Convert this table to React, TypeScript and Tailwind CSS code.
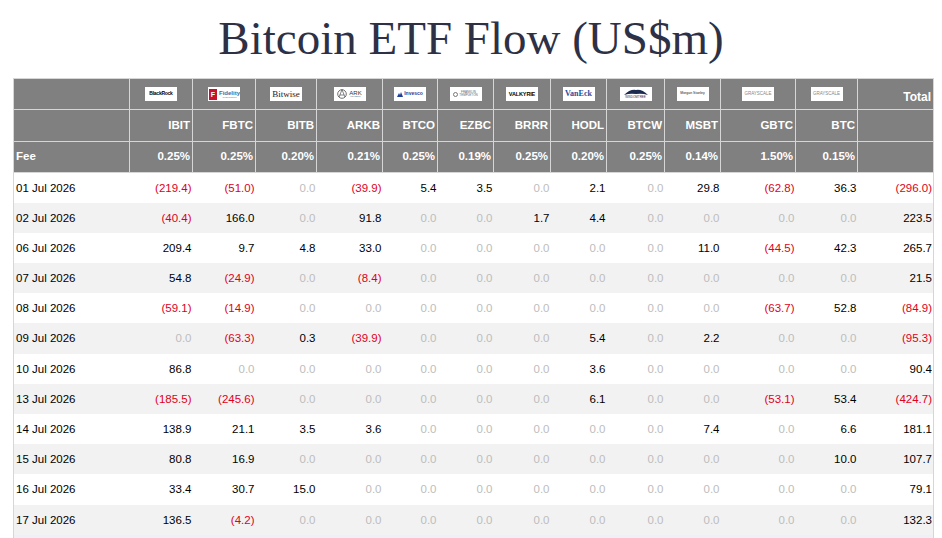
import React from "react"

type Fund = { ticker: string; fee: string; logo: React.ReactNode; width: number }

function LogoBox({ children, className = "" }: { children: React.ReactNode; className?: string }) {
  return (
    <div
      className={`mx-auto flex h-[14px] w-[32px] items-center justify-center overflow-hidden bg-white font-normal ${className}`}
    >
      {children}
    </div>
  )
}

const funds: Fund[] = [
  {
    ticker: "IBIT",
    fee: "0.25%",
    width: 63,
    logo: (
      <LogoBox>
        <span className="text-[5px] font-bold tracking-tighter text-black">BlackRock</span>
      </LogoBox>
    ),
  },
  {
    ticker: "FBTC",
    fee: "0.25%",
    width: 63,
    logo: (
      <LogoBox className="justify-start gap-[2px] pl-[1px]">
        <span className="flex h-[11px] w-[8px] items-center justify-center bg-[#c8102e] text-[7px] font-bold leading-none text-white">
          F
        </span>
        <span className="flex flex-col leading-none">
          <span className="text-[6px] font-bold text-[#3b6ea8]">Fidelity</span>
          <span className="text-[2px] text-[#777]">INVESTMENTS</span>
        </span>
      </LogoBox>
    ),
  },
  {
    ticker: "BITB",
    fee: "0.20%",
    width: 61,
    logo: (
      <LogoBox>
        <span className="font-['Liberation_Serif',serif] text-[9px] leading-none text-[#222]">Bitwise</span>
      </LogoBox>
    ),
  },
  {
    ticker: "ARKB",
    fee: "0.21%",
    width: 66,
    logo: (
      <LogoBox className="gap-[2px]">
        <svg width="10" height="10" viewBox="0 0 10 10">
          <circle cx="5" cy="5" r="4.3" fill="none" stroke="#333" strokeWidth="0.7" />
          <path d="M5 0.7 L2 8 M5 0.7 L8 8 M3 6 L7 6" stroke="#333" strokeWidth="0.6" fill="none" />
        </svg>
        <span className="flex flex-col items-center leading-none">
          <span className="text-[6px] text-[#333]">ARK</span>
          <span className="text-[2.5px] tracking-widest text-[#555]">INVEST</span>
        </span>
      </LogoBox>
    ),
  },
  {
    ticker: "BTCO",
    fee: "0.25%",
    width: 55,
    logo: (
      <LogoBox className="gap-[1px]">
        <svg width="6" height="5" viewBox="0 0 6 5">
          <path d="M0 5 L2 1 L3 3 L4 0 L6 5 Z" fill="#1f3f99" />
        </svg>
        <span className="text-[5px] font-bold text-[#1f3f99]">Invesco</span>
      </LogoBox>
    ),
  },
  {
    ticker: "EZBC",
    fee: "0.19%",
    width: 56,
    logo: (
      <LogoBox className="gap-[1px]">
        <span className="h-[5px] w-[5px] rounded-full border-[0.5px] border-[#777]" />
        <span className="flex flex-col leading-none">
          <span className="text-[3px] text-[#666]">FRANKLIN</span>
          <span className="text-[3px] text-[#666]">TEMPLETON</span>
        </span>
      </LogoBox>
    ),
  },
  {
    ticker: "BRRR",
    fee: "0.25%",
    width: 57,
    logo: (
      <LogoBox>
        <span className="text-[5.5px] font-bold tracking-tight text-black">VALKYRIE</span>
      </LogoBox>
    ),
  },
  {
    ticker: "HODL",
    fee: "0.20%",
    width: 56,
    logo: (
      <LogoBox>
        <span className="font-['Liberation_Serif',serif] text-[8px] font-bold leading-none text-[#1e4e9e]">VanEck</span>
      </LogoBox>
    ),
  },
  {
    ticker: "BTCW",
    fee: "0.25%",
    width: 58,
    logo: (
      <LogoBox className="flex-col">
        <svg width="24" height="7" viewBox="0 0 24 7">
          <path d="M0 6 Q6 0 12 1 Q18 0 24 6 Q18 4 12 5 Q6 4 0 6 Z" fill="#1c2a4f" />
        </svg>
        <span className="text-[3px] leading-none text-[#1c2a4f]">WISDOMTREE</span>
      </LogoBox>
    ),
  },
  {
    ticker: "MSBT",
    fee: "0.14%",
    width: 56,
    logo: (
      <LogoBox>
        <span className="text-[3.5px] text-[#222]">Morgan Stanley</span>
      </LogoBox>
    ),
  },
  {
    ticker: "GBTC",
    fee: "1.50%",
    width: 75,
    logo: (
      <LogoBox>
        <span className="text-[4.5px] text-[#888]">GRAYSCALE</span>
      </LogoBox>
    ),
  },
  {
    ticker: "BTC",
    fee: "0.15%",
    width: 62,
    logo: (
      <LogoBox>
        <span className="text-[4.5px] text-[#888]">GRAYSCALE</span>
      </LogoBox>
    ),
  },
]

const rows: [string, string[]][] = [
  ["01 Jul 2026", ["(219.4)", "(51.0)", "0.0", "(39.9)", "5.4", "3.5", "0.0", "2.1", "0.0", "29.8", "(62.8)", "36.3", "(296.0)"]],
  ["02 Jul 2026", ["(40.4)", "166.0", "0.0", "91.8", "0.0", "0.0", "1.7", "4.4", "0.0", "0.0", "0.0", "0.0", "223.5"]],
  ["06 Jul 2026", ["209.4", "9.7", "4.8", "33.0", "0.0", "0.0", "0.0", "0.0", "0.0", "11.0", "(44.5)", "42.3", "265.7"]],
  ["07 Jul 2026", ["54.8", "(24.9)", "0.0", "(8.4)", "0.0", "0.0", "0.0", "0.0", "0.0", "0.0", "0.0", "0.0", "21.5"]],
  ["08 Jul 2026", ["(59.1)", "(14.9)", "0.0", "0.0", "0.0", "0.0", "0.0", "0.0", "0.0", "0.0", "(63.7)", "52.8", "(84.9)"]],
  ["09 Jul 2026", ["0.0", "(63.3)", "0.3", "(39.9)", "0.0", "0.0", "0.0", "5.4", "0.0", "2.2", "0.0", "0.0", "(95.3)"]],
  ["10 Jul 2026", ["86.8", "0.0", "0.0", "0.0", "0.0", "0.0", "0.0", "3.6", "0.0", "0.0", "0.0", "0.0", "90.4"]],
  ["13 Jul 2026", ["(185.5)", "(245.6)", "0.0", "0.0", "0.0", "0.0", "0.0", "6.1", "0.0", "0.0", "(53.1)", "53.4", "(424.7)"]],
  ["14 Jul 2026", ["138.9", "21.1", "3.5", "3.6", "0.0", "0.0", "0.0", "0.0", "0.0", "7.4", "0.0", "6.6", "181.1"]],
  ["15 Jul 2026", ["80.8", "16.9", "0.0", "0.0", "0.0", "0.0", "0.0", "0.0", "0.0", "0.0", "0.0", "10.0", "107.7"]],
  ["16 Jul 2026", ["33.4", "30.7", "15.0", "0.0", "0.0", "0.0", "0.0", "0.0", "0.0", "0.0", "0.0", "0.0", "79.1"]],
  ["17 Jul 2026", ["136.5", "(4.2)", "0.0", "0.0", "0.0", "0.0", "0.0", "0.0", "0.0", "0.0", "0.0", "0.0", "132.3"]],
]

function valueColor(v: string) {
  if (v.startsWith("(")) return "text-[#e0001b]"
  if (v === "0.0") return "text-[#bdbdbd]"
  return "text-black"
}

export default function App() {
  const th = "border border-[#d6d6d6] bg-[#808080] px-[2px] font-bold text-white"

  return (
    <div className="min-h-screen bg-white font-['Liberation_Sans',Arial,sans-serif]">
      <h1 className="h-[78px] pt-[14px] text-center font-['Liberation_Serif','Times_New_Roman',serif] text-[47px] leading-[48px] font-normal text-[#2e3146]">
        Bitcoin ETF Flow (US$m)
      </h1>

      <table className="ml-[13px] w-[920px] table-fixed border-collapse text-[11.5px]">
        <colgroup>
          <col className="w-[116px]" />
          {funds.map((f) => (
            <col key={f.ticker} style={{ width: f.width }} />
          ))}
          <col className="w-[76px]" />
        </colgroup>
        <thead>
          <tr className="h-[31px]">
            <th className={th}></th>
            {funds.map((f) => (
              <th key={f.ticker} className={th}>
                {f.logo}
              </th>
            ))}
            <th className={`${th} pt-[9px] text-right align-top text-[12px]`}>Total</th>
          </tr>
          <tr className="h-[32px]">
            <th className={th}></th>
            {funds.map((f) => (
              <th key={f.ticker} className={`${th} text-right`}>
                {f.ticker}
              </th>
            ))}
            <th className={th}></th>
          </tr>
          <tr className="h-[31px]">
            <th className={`${th} text-left`}>Fee</th>
            {funds.map((f) => (
              <th key={f.ticker} className={`${th} text-right`}>
                {f.fee}
              </th>
            ))}
            <th className={th}></th>
          </tr>
        </thead>
        <tbody className="border-x border-[#d6d6d6]">
          {rows.map(([date, values], i) => (
            <tr key={date} className={`h-[30.2px] ${i % 2 === 1 ? "bg-[#f2f2f2]" : "bg-white"}`}>
              <td className="px-[2px] pt-[1px] text-left text-black">{date}</td>
              {values.map((v, j) => (
                <td key={j} className={`pr-[1px] pt-[1px] text-right ${valueColor(v)}`}>
                  {v}
                </td>
              ))}
            </tr>
          ))}
          <tr className="h-[30px] bg-[#eef0f7]">
            <td colSpan={14}></td>
          </tr>
        </tbody>
      </table>
    </div>
  )
}
